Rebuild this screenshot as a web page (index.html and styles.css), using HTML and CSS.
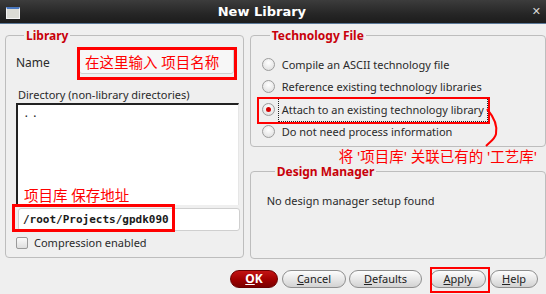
FILE: index.html
```html
<!DOCTYPE html>
<html lang="zh-CN">
<head>
    <meta charset="UTF-8">
    <meta name="viewport" content="width=device-width, initial-scale=1.0">
    <title>New Library</title>
    <link rel="stylesheet" href="styles.css">
</head>
<body>
    <div class="window">
        <div class="titlebar">
            <span class="win-icon"></span>
            <span class="title">New Library</span>
            <span class="close">&#x2715;</span>
        </div>
        <div class="dialog">
            <div class="columns">
                <fieldset class="group lib">
                    <legend>Library</legend>
                    <div class="name-row">
                        <span class="name-label">Name</span>
                        <div class="field name-field">在这里输入 项目名称</div>
                    </div>
                    <div class="dir-label">Directory (non-library directories)</div>
                    <div class="listbox">
                        <div class="list-item">..</div>
                        <div class="list-note">项目库 保存地址</div>
                    </div>
                    <div class="field path-field">/root/Projects/gpdk090</div>
                    <div class="check-row"><span class="checkbox"></span>Compression enabled</div>
                </fieldset>
                <div class="right-col">
                    <fieldset class="group tech">
                        <legend>Technology File</legend>
                        <div class="radio-row"><span class="radio"></span>Compile an ASCII technology file</div>
                        <div class="radio-row"><span class="radio"></span>Reference existing technology libraries</div>
                        <div class="radio-row"><span class="radio checked"></span><span class="focus">Attach to an existing technology library</span></div>
                        <div class="radio-row"><span class="radio"></span>Do not need process information</div>
                    </fieldset>
                    <div class="tech-note">将 '项目库' 关联已有的 '工艺库'</div>
                    <fieldset class="group dm">
                        <legend>Design Manager</legend>
                        <div class="dm-text">No design manager setup found</div>
                    </fieldset>
                </div>
            </div>
            <div class="buttons">
                <a class="btn ok" href="javascript:void(0)"><u>O</u>K</a>
                <a class="btn cancel" href="javascript:void(0)"><u>C</u>ancel</a>
                <a class="btn defaults" href="javascript:void(0)"><u>D</u>efaults</a>
                <a class="btn apply" href="javascript:void(0)"><u>A</u>pply</a>
                <a class="btn help" href="javascript:void(0)"><u>H</u>elp</a>
            </div>

            <!-- 标注 -->
            <div class="mark mark-name"></div>
            <div class="mark mark-path"></div>
            <div class="mark mark-radio"></div>
            <div class="mark mark-apply"></div>
            <svg class="mark-curve" width="20" height="40" viewBox="0 0 20 40">
                <path d="M3 1 C 9 8, 14 16, 12 26 C 11 31, 6 34, 2 38" fill="none" stroke="#f00" stroke-width="2"/>
            </svg>
        </div>
    </div>
</body>
</html>
```

FILE: styles.css
```css
* {
    margin: 0;
    padding: 0;
    box-sizing: border-box;
    font-family: "Noto Sans", "Noto Sans CJK SC", sans-serif;
}
html, body {
    width: 100%;
    height: 100%;
    overflow: hidden;
    background: #efefef;
}
.window {
    width: 546px;
    height: 294px;
    display: flex;
    flex-direction: column;
}
.titlebar {
    height: 24px;
    flex: none;
    display: flex;
    align-items: center;
    padding: 0 5px 0 6px;
    background: linear-gradient(#3c3c3c, #262626 60%, #1c1c1c);
    border-bottom: 1px solid #5a7898;
}
.win-icon {
    width: 14px;
    height: 12px;
    background: #dcdcd6;
    border: 1px solid #f4f4f4;
    border-top: 2px solid #4a78c0;
    margin-top: 2px;
}
.title {
    flex: 1;
    text-align: center;
    color: #fff;
    font-family: "DejaVu Sans", sans-serif;
    font-weight: bold;
    font-size: 13px;
    margin-right: 28px;
}
.close {
    color: #d8d8d8;
    font-size: 11px;
    font-weight: bold;
    font-family: "DejaVu Sans", sans-serif;
}
.dialog {
    flex: 1;
    position: relative;
    padding: 4px 0 0 5px;
    display: flex;
    flex-direction: column;
    font-size: 11px;
    color: #2a2a2a;
}
.columns {
    display: flex;
    gap: 6px;
}
.group {
    border: 1px solid #bdbdbd;
    border-radius: 4px;
    min-width: 0;
}
.group legend {
    color: #c8000a;
    font-weight: bold;
    font-size: 12px;
    margin-left: 8px;
    padding: 0 2px;
    line-height: 15px;
}
.lib {
    width: 240px;
    height: 230px;
    padding: 5px 6px 0 10px;
}
.name-row {
    display: flex;
    align-items: center;
}
.name-label {
    width: 63px;
    font-size: 12px;
    padding-top: 2px;
}
.field {
    background: #f7f7f7;
    border: 1px solid #cfcfcf;
    border-radius: 3px;
}
.name-field {
    width: 155px;
    height: 26px;
    padding: 4px 0 0 5px;
    color: #f00;
    font-size: 14.5px;
    line-height: 18px;
}
.dir-label {
    margin: 14px 0 0 2px;
    line-height: 13px;
}
.listbox {
    position: relative;
    width: 223px;
    height: 102px;
    margin-top: 2px;
    background: #fff;
    border-top: 2px solid #222;
    border-left: 2px solid #222;
    border-right: 1px solid #e6e6e6;
    padding: 2px 0 0 5px;
}
.list-item {
    font-family: "DejaVu Sans Mono", monospace;
    letter-spacing: 2px;
    line-height: 14px;
}
.list-note {
    position: absolute;
    left: 6px;
    bottom: 1px;
    color: #f00;
    font-size: 14.5px;
    line-height: 18px;
}
.path-field {
    width: 222px;
    height: 23px;
    margin: 3px 0 0 2px;
    background: #fff;
    padding: 0 0 0 4px;
    font-family: "DejaVu Sans Mono", monospace;
    font-weight: bold;
    font-size: 11px;
    line-height: 21px;
    color: #1a1a1a;
}
.check-row {
    display: flex;
    align-items: center;
    gap: 6px;
    margin-top: 4px;
}
.checkbox {
    width: 12px;
    height: 12px;
    border: 1px solid #9a9a9a;
    border-radius: 2px;
    background: linear-gradient(#fafafa, #dedede);
}
.right-col {
    width: 298px;
    display: flex;
    flex-direction: column;
}
.tech {
    height: 119px;
    padding: 10px 0 0 11px;
}
.radio-row {
    display: flex;
    align-items: center;
    gap: 7px;
    height: 22.5px;
}
.radio {
    width: 13px;
    height: 13px;
    border-radius: 50%;
    border: 1px solid #9c9c9c;
    background: radial-gradient(circle at 50% 35%, #fff, #dadada);
    display: flex;
    align-items: center;
    justify-content: center;
}
.radio.checked::after {
    content: "";
    width: 5px;
    height: 5px;
    border-radius: 50%;
    background: #d40000;
}
.focus {
    outline: 1px dotted #222;
    padding: 4px 3px;
    margin: 0 -3px;
}
.tech-note {
    color: #f00;
    font-size: 14.5px;
    line-height: 16px;
    text-align: right;
    padding-right: 9px;
    margin-top: 1px;
}
.dm {
    height: 95px;
    padding: 14px 0 0 16px;
}
.buttons {
    display: flex;
    gap: 4px;
    padding: 11px 0 0 225px;
}
.btn {
    height: 18px;
    border-radius: 9px;
    border: 1px solid #8e8e8e;
    background: linear-gradient(#fdfdfd, #e6e6e6 55%, #d2d2d2);
    color: #222;
    text-decoration: none;
    font-size: 11px;
    line-height: 16px;
    text-align: center;
}
.btn u {
    text-decoration: underline;
}
.ok {
    width: 48px;
    background: linear-gradient(#c31414, #a00000 55%, #7a0000);
    border-color: #6a0000;
    color: #fff;
    font-weight: bold;
    font-size: 12px;
}
.cancel { width: 64px; }
.defaults { width: 73px; margin-left: -1px; }
.apply { width: 56px; margin-left: 4px; }
.help { width: 48px; }

.mark {
    position: absolute;
    border: 2px solid #f00;
}
.mark-name {
    left: 77px;
    top: 23px;
    width: 160px;
    height: 33px;
    border-width: 3px;
}
.mark-path {
    left: 12px;
    top: 180px;
    width: 163px;
    height: 28px;
    border-width: 3px;
}
.mark-radio {
    left: 257px;
    top: 73px;
    width: 233px;
    height: 27px;
}
.mark-apply {
    left: 430px;
    top: 243px;
    width: 60px;
    height: 26px;
}
.mark-curve {
    position: absolute;
    left: 484px;
    top: 84px;
}
```
